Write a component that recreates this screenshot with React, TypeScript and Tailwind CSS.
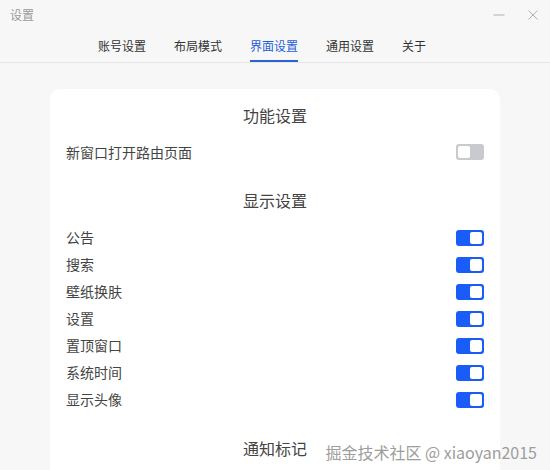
import { useState } from 'react'

const tabs = ['账号设置', '布局模式', '界面设置', '通用设置', '关于']

const displayItems = ['公告', '搜索', '壁纸换肤', '设置', '置顶窗口', '系统时间', '显示头像']

function Toggle({ on, onChange }: { on: boolean; onChange: () => void }) {
  return (
    <button
      onClick={onChange}
      className={`w-[28px] h-[16px] rounded-[3px] p-[2px] flex ${
        on ? 'bg-[#1a5cf8] justify-end' : 'bg-[#c9cacd] justify-start'
      }`}
    >
      <span className="w-[12px] h-[12px] bg-white rounded-[2px] block" />
    </button>
  )
}

function SectionTitle({ children, className = '' }: { children: string; className?: string }) {
  return (
    <div className={`h-[36px] flex items-center justify-center text-[16px] text-[#444] ${className}`}>
      {children}
    </div>
  )
}

export default function App() {
  const [active, setActive] = useState(2)
  const [newWindow, setNewWindow] = useState(false)
  const [display, setDisplay] = useState<boolean[]>(displayItems.map(() => true))

  return (
    <div
      className="w-[550px] h-[470px] bg-[#f7f7f8] overflow-hidden relative"
      style={{ fontFamily: '"Noto Sans CJK SC", "Noto Sans", sans-serif' }}
    >
      {/* Title bar */}
      <div className="h-[30px] flex items-center justify-between pl-[10px] pr-[12px]">
        <span className="text-[12px] text-[#9a9a9a] leading-none">设置</span>
        <div className="flex items-center gap-[23px]">
          <svg width="12" height="12" viewBox="0 0 12 12">
            <line x1="0.5" y1="6" x2="11.5" y2="6" stroke="#b0b0b0" strokeWidth="1" />
          </svg>
          <svg width="10" height="10" viewBox="0 0 10 10">
            <path d="M0.5 0.5 L9.5 9.5 M9.5 0.5 L0.5 9.5" stroke="#b0b0b0" strokeWidth="1" />
          </svg>
        </div>
      </div>

      {/* Tabs */}
      <div className="h-[33px] flex items-stretch pl-[98px] gap-[28px] border-b border-[#e6e6e6]">
        {tabs.map((t, i) => (
          <button
            key={t}
            onClick={() => setActive(i)}
            className={`pt-[2px] text-[12px] leading-none flex items-center border-b-2 ${
              active === i ? 'text-[#1d5fd6] border-[#2a62cf]' : 'text-[#333] border-transparent'
            }`}
          >
            {t}
          </button>
        ))}
      </div>

      {/* Settings card */}
      <div className="w-[450px] mx-auto mt-[26px] bg-white rounded-[10px] px-4 pt-[8px] pb-6">
        <SectionTitle>功能设置</SectionTitle>
        <div className="h-[38px] flex items-center justify-between text-[14px] text-[#444]">
          <span>新窗口打开路由页面</span>
          <Toggle on={newWindow} onChange={() => setNewWindow(!newWindow)} />
        </div>

        <SectionTitle className="mt-[11px]">显示设置</SectionTitle>
        <div className="mt-[6px]">
          {displayItems.map((label, i) => (
            <div key={label} className="h-[27px] flex items-center justify-between text-[14px] text-[#444]">
              <span>{label}</span>
              <Toggle
                on={display[i]}
                onChange={() => setDisplay(display.map((v, j) => (j === i ? !v : v)))}
              />
            </div>
          ))}
        </div>

        <SectionTitle className="mt-[17px]">通知标记</SectionTitle>
      </div>

      {/* Watermark */}
      <div className="absolute right-[13px] bottom-[10px] text-[16px] text-[#9d9d9d] leading-none whitespace-nowrap">
        掘金技术社区 @ xiaoyan2015
      </div>
    </div>
  )
}
